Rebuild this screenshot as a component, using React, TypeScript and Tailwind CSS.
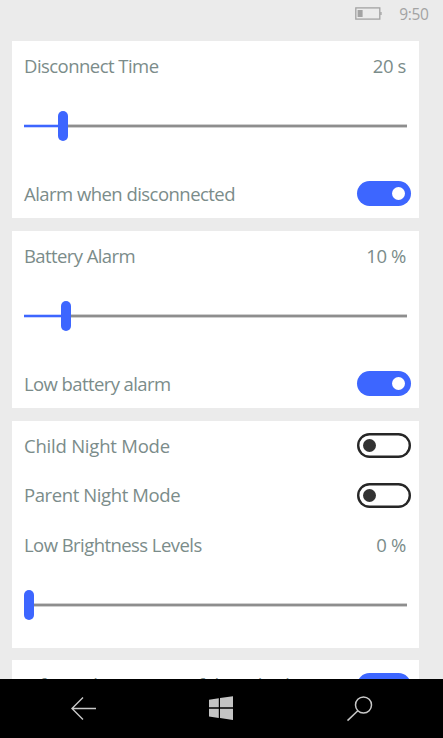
import React from 'react';

type LabelProps = { children: React.ReactNode; className?: string };

const Label = ({ children, className = 'tracking-[-0.54px]' }: LabelProps) => (
  <span className={`whitespace-pre text-[18.5px] leading-6 text-[#7b8c8a] ${className}`}>{children}</span>
);

const Row = ({ children }: { children: React.ReactNode }) => (
  <div className="flex h-[49.4px] items-center justify-between pl-3">{children}</div>
);

const Toggle = ({ on, className = '' }: { on: boolean; className?: string }) => (
  <button
    type="button"
    role="switch"
    aria-checked={on}
    className={`mr-2 flex h-[25px] w-[54px] shrink-0 items-center rounded-full px-[6px] ${
      on ? 'justify-end bg-[#3d66ff]' : 'justify-start bg-white shadow-[inset_0_0_0_2.4px_#262626]'
    } ${className}`}
  >
    <span className={`h-[13px] w-[13px] rounded-full ${on ? 'bg-white' : 'bg-[#333333]'}`} />
  </button>
);

// offset = distance from the start of the track to the thumb
const Slider = ({ offset }: { offset: number }) => (
  <div className="flex h-[78.6px] items-start pt-[20.5px] pr-[12.5px] pl-3">
    <div className="flex h-[30px] w-full items-center">
      <div className="h-1 border-y border-[#c9d4ff] bg-[#3d66ff]" style={{ width: offset }} />
      <div className="h-[30px] w-[10px] shrink-0 rounded-full bg-[#3d66ff]" />
      <div className="h-1 flex-1 border-y border-[#cfcfcf] bg-[#8e8e8e]" />
    </div>
  </div>
);

export default function App() {
  return (
    <div className="flex h-[738px] w-[443px] flex-col overflow-hidden bg-[#ebebeb] font-['Open_Sans','Noto_Sans',sans-serif]">
      <header className="flex h-[41px] shrink-0 items-start justify-end pr-[14.5px]">
        <svg className="mt-[7px] mr-[17px]" width="27" height="13" viewBox="0 0 27 13" fill="none">
          <rect x="0.8" y="0.9" width="24" height="11.2" stroke="#a3a3a3" strokeWidth="1.3" />
          <rect x="2.6" y="3" width="5" height="7" fill="#a3a3a3" />
          <rect x="25.3" y="5" width="1.3" height="3" fill="#a3a3a3" />
        </svg>
        <span className="mt-[2px] text-[15.5px] leading-6 tracking-[-0.35px] text-[#a3a3a3]">9:50</span>
      </header>

      <main className="flex min-h-0 flex-1 flex-col overflow-hidden pr-6 pl-3">
        <section className="mb-[13px] h-[177px] shrink-0 bg-white">
          <Row>
            <Label>Disconnect Time</Label>
            <Label className="mr-[13px] tracking-[-0.4px]">20 s</Label>
          </Row>
          <Slider offset={34} />
          <Row>
            <Label>Alarm when disconnected</Label>
            <Toggle on />
          </Row>
        </section>

        <section className="mb-[13px] h-[177px] shrink-0 bg-white">
          <Row>
            <Label className="tracking-[-0.6px]">Battery Alarm</Label>
            <Label className="mr-[13px] tracking-[-0.4px]">10 %</Label>
          </Row>
          <Slider offset={37} />
          <Row>
            <Label className="tracking-[-0.6px]">Low battery alarm</Label>
            <Toggle on />
          </Row>
        </section>

        <section className="mb-3 h-[227px] shrink-0 bg-white">
          <Row>
            <Label className="tracking-[-0.22px]">Child Night Mode</Label>
            <Toggle on={false} />
          </Row>
          <Row>
            <Label className="tracking-[-0.4px]">Parent Night Mode</Label>
            <Toggle on={false} />
          </Row>
          <Row>
            <Label className="pt-[2px] tracking-[-0.56px]">Low Brightness Levels</Label>
            <Label className="mr-[13px] pt-[2px] tracking-[-0.3px]">0 %</Label>
          </Row>
          <Slider offset={0} />
        </section>

        <section className="h-[60px] shrink-0 bg-white">
          <Row>
            <Label>Inform about successful reached</Label>
            <Toggle on className="mt-[1.5px]" />
          </Row>
        </section>
      </main>

      <nav className="flex h-[59px] shrink-0 items-start bg-black">
        <svg className="mt-[17px] ml-[70px]" width="27" height="25" viewBox="0 0 27 25" fill="none" stroke="#c8c8c8" strokeWidth="1.4">
          <path d="M26 12.5H2M13 1.5L2 12.5L13 23.5" />
        </svg>
        <svg className="mt-[17px] ml-[112px]" width="25" height="25" viewBox="0 0 25 25" fill="#c4c4c4">
          <path d="M0 3.7L9.8 2.3V11.3H0zM11 2.1L24 0.3V11.3H11zM0 12.7H9.8V21.9L0 20.5zM11 12.7H24V23.9L11 22.1z" />
        </svg>
        <svg className="mt-[16px] ml-[112px]" width="27" height="27" viewBox="0 0 27 27" fill="none" stroke="#c8c8c8" strokeWidth="1.5">
          <circle cx="17.5" cy="10" r="8" />
          <path d="M11.8 15.7L1.5 25.6" />
        </svg>
      </nav>
    </div>
  );
}
